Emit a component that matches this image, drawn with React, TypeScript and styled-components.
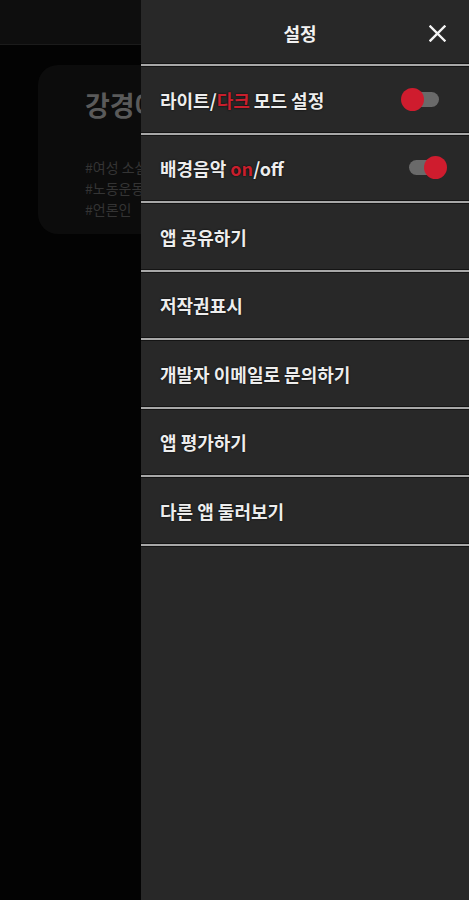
import React from "react";
import styled, { createGlobalStyle } from "styled-components";

const Global = createGlobalStyle`
  html, body { margin: 0; padding: 0; background: #000; }
  body { font-family: "Noto Sans CJK KR", "Noto Sans", sans-serif; }
  * { box-sizing: border-box; }
`;

const Screen = styled.div`
  position: relative;
  width: 469px;
  height: 900px;
  overflow: hidden;
  background: #030303;
`;

const TopBar = styled.div`
  height: 45px;
  background: #0e0e0e;
  border-bottom: 1px solid #1b1b1b;
`;

const Content = styled.div`
  padding: 20px 0 0 38px;
`;

const Card = styled.div`
  width: 300px;
  height: 169px;
  background: #0c0c0c;
  border-radius: 20px;
  padding: 22px 0 0 47px;
  display: flex;
  flex-direction: column;
`;

const CardTitle = styled.div`
  font-size: 27px;
  font-weight: 700;
  color: #5a5a5a;
  line-height: 36px;
  margin-bottom: 34px;
`;

const Tag = styled.div`
  font-size: 14px;
  color: #343434;
  line-height: 21px;
`;

const Drawer = styled.div`
  position: absolute;
  top: 0;
  right: 0;
  width: 328px;
  height: 900px;
  background: #282828;
  display: flex;
  flex-direction: column;
`;

const Header = styled.div`
  position: relative;
  height: 63px;
  display: flex;
  align-items: center;
  justify-content: center;
  padding-right: 10px;
`;

const Title = styled.div`
  color: #f2f2f2;
  font-size: 18px;
  font-weight: 700;
  margin-top: 2px;
`;

const Close = styled.button`
  position: absolute;
  right: 23px;
  top: 25px;
  width: 17px;
  height: 17px;
  padding: 0;
  border: none;
  background: none;
  display: flex;
`;

const Divider = styled.div`
  height: 4px;
  border-top: 1px solid #141414;
  border-bottom: 1px solid #141414;
  background: #a8a8a8;
`;

const Row = styled.div`
  height: 64.5px;
  display: flex;
  align-items: center;
  justify-content: space-between;
  padding: 0 22px 0 19px;
`;

const Label = styled.div`
  color: #ededed;
  font-size: 18px;
  font-weight: 700;
  text-shadow: 0 0 2px #000;
  margin-top: 1px;
`;

const Red = styled.span`
  color: #c81f2d;
`;

const Track = styled.div<{ $on: boolean }>`
  position: relative;
  width: 36px;
  height: 15px;
  border-radius: 8px;
  background: #6a6a6a;
  margin-right: ${(p) => (p.$on ? "2px" : "8px")};
`;

const Knob = styled.div<{ $on: boolean }>`
  position: absolute;
  top: -4px;
  left: ${(p) => (p.$on ? "15px" : "-2px")};
  width: 23px;
  height: 23px;
  border-radius: 50%;
  background: #cf1c2e;
`;

const Switch = ({ on }: { on: boolean }) => (
  <Track $on={on}>
    <Knob $on={on} />
  </Track>
);

const items: { label: React.ReactNode; toggle?: boolean }[] = [
  {
    label: (
      <>
        라이트/<Red>다크</Red> 모드 설정
      </>
    ),
    toggle: false,
  },
  {
    label: (
      <>
        배경음악 <Red>on</Red>/off
      </>
    ),
    toggle: true,
  },
  { label: "앱 공유하기" },
  { label: "저작권표시" },
  { label: "개발자 이메일로 문의하기" },
  { label: "앱 평가하기" },
  { label: "다른 앱 둘러보기" },
];

export default function App() {
  return (
    <>
      <Global />
      <Screen>
        <TopBar />
        <Content>
          <Card>
            <CardTitle>강경애</CardTitle>
            <Tag>#여성 소설가</Tag>
            <Tag>#노동운동</Tag>
            <Tag>#언론인</Tag>
          </Card>
        </Content>
        <Drawer>
          <Header>
            <Title>설정</Title>
            <Close aria-label="닫기">
              <svg width="17" height="17" viewBox="0 0 17 17">
                <path d="M1.5 1.5 L15.5 15.5 M15.5 1.5 L1.5 15.5" stroke="#f4f4f4" strokeWidth="2.4" strokeLinecap="square" />
              </svg>
            </Close>
          </Header>
          {items.map((it, i) => (
            <React.Fragment key={i}>
              <Divider />
              <Row>
                <Label>{it.label}</Label>
                {it.toggle !== undefined && <Switch on={it.toggle} />}
              </Row>
            </React.Fragment>
          ))}
          <Divider />
        </Drawer>
      </Screen>
    </>
  );
}
